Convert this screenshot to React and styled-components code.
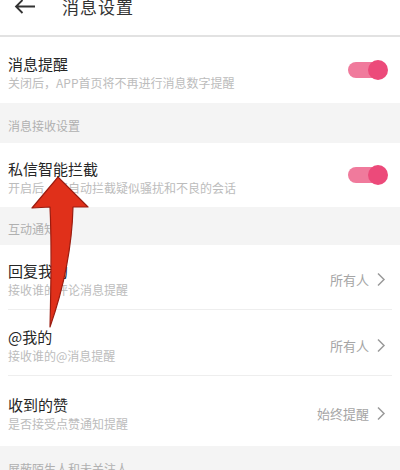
import React from "react";
import styled, { createGlobalStyle } from "styled-components";

const GlobalStyle = createGlobalStyle`
  html, body {
    margin: 0;
    padding: 0;
    background: #ffffff;
    font-family: "Noto Sans CJK SC", "Noto Sans", sans-serif;
  }
  #root {
    width: 400px;
    height: 470px;
    overflow: hidden;
    position: relative;
  }
`;

const items = [
  { type: "toggle", title: "消息提醒", desc: "关闭后，APP首页将不再进行消息数字提醒", h: 66 },
  { type: "section", title: "消息接收设置", h: 40 },
  { type: "toggle", title: "私信智能拦截", desc: "开启后，将自动拦截疑似骚扰和不良的会话", h: 64 },
  { type: "section", title: "互动通知", h: 38 },
  { type: "link", title: "回复我的", desc: "接收谁的评论消息提醒", value: "所有人", h: 65, line: true },
  { type: "link", title: "@我的", desc: "接收谁的@消息提醒", value: "所有人", h: 66, line: true },
  { type: "link", title: "收到的赞", desc: "是否接受点赞通知提醒", value: "始终提醒", h: 70 },
  { type: "section", title: "屏蔽陌生人和未关注人", h: 40 },
];

const App = () => {
  return (
    <Page>
      <GlobalStyle />
      <Header>
        <BackIcon width="22" height="16" viewBox="0 0 22 16">
          <path d="M21 7.5H2M8.5 1L2 7.5L8.5 14" fill="none" stroke="#333" strokeWidth="1.8" />
        </BackIcon>
        <Title>消息设置</Title>
      </Header>
      {items.map((it) =>
        it.type === "section" ? (
          <Section key={it.title} h={it.h}>{it.title}</Section>
        ) : (
          <Row key={it.title} h={it.h} line={it.line ? 1 : 0}>
            <TextCol>
              <RowTitle>{it.title}</RowTitle>
              <RowDesc>{it.desc}</RowDesc>
            </TextCol>
            {it.type === "toggle" ? (
              <Toggle>
                <Knob />
              </Toggle>
            ) : (
              <Value>
                {it.value}
                <svg width="10" height="15" viewBox="0 0 10 15">
                  <path d="M2 1.5L8 7.5L2 13.5" fill="none" stroke="#9a9a9a" strokeWidth="1.5" />
                </svg>
              </Value>
            )}
          </Row>
        )
      )}
      <Arrow width="70" height="160" viewBox="0 0 70 160">
        <path
          d="M28 0 L58 30 L43 30 C42 70 34 110 20 150 C21 110 22 70 20 30 L2 31 Z"
          fill="#e0301a"
          stroke="#9a1c10"
          strokeWidth="1.2"
          strokeLinejoin="round"
        />
      </Arrow>
    </Page>
  );
};

export default App;

const Page = styled.div`
  width: 400px;
  display: flex;
  flex-direction: column;
`;

const Header = styled.header`
  height: 37px;
  display: flex;
  align-items: flex-start;
  border-bottom: 2px solid #e2e2e2;
  box-sizing: border-box;
  padding-left: 14px;
`;

const BackIcon = styled.svg`
  margin-top: -1px;
`;

const Title = styled.div`
  margin-left: 26px;
  margin-top: -6px;
  font-size: 17px;
  color: #333;
  letter-spacing: 1px;
`;

const Section = styled.div`
  height: ${(p) => p.h}px;
  background: #f4f4f4;
  color: #b0b0b0;
  font-size: 12px;
  display: flex;
  align-items: center;
  padding-left: 8px;
  padding-top: 4px;
  box-sizing: border-box;
`;

const Row = styled.div`
  height: ${(p) => p.h}px;
  display: flex;
  align-items: center;
  justify-content: space-between;
  padding: 4px 14px 0 8px;
  box-sizing: border-box;
  background-color: #fff;
  background-image: ${(p) =>
    p.line ? "linear-gradient(#eeeeee, #eeeeee)" : "none"};
  background-repeat: no-repeat;
  background-position: left 8px bottom 0;
  background-size: calc(100% - 16px) 1px;
`;

const TextCol = styled.div`
  display: flex;
  flex-direction: column;
  gap: 3px;
`;

const RowTitle = styled.div`
  font-size: 15px;
  color: #262626;
  line-height: 18px;
`;

const RowDesc = styled.div`
  font-size: 12px;
  color: #bcbcbc;
  line-height: 14px;
`;

const Toggle = styled.div`
  width: 38px;
  height: 16px;
  border-radius: 8px;
  background: #f07a9c;
  position: relative;
  margin-top: -4px;
`;

const Knob = styled.div`
  position: absolute;
  right: -2px;
  top: -2px;
  width: 20px;
  height: 20px;
  border-radius: 50%;
  background: #ec4a7a;
`;

const Value = styled.div`
  display: flex;
  align-items: center;
  gap: 7px;
  font-size: 13px;
  color: #a5a5a5;
`;

const Arrow = styled.svg`
  position: absolute;
  left: 30px;
  top: 177px;
`;
